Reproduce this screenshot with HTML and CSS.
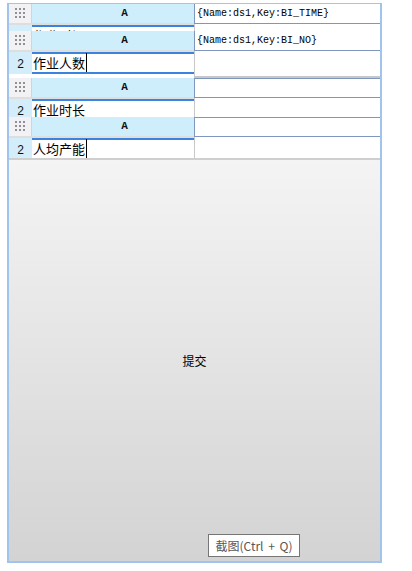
FILE: index.html
```html
<!DOCTYPE html>
<html lang="zh-CN">
<head>
    <meta charset="UTF-8">
    <meta name="viewport" content="width=device-width, initial-scale=1.0">
    <title>提交</title>
    <link rel="stylesheet" href="styles.css">
</head>
<body>
    <div class="frame">
        <div class="block b1">
            <div class="left">
                <div class="head"><span class="grip"><i></i><i></i><i></i><i></i><i></i><i></i><i></i><i></i><i></i></span><span class="col">A</span></div>
                <div class="sep"></div>
                <div class="row"><span class="num">2</span><span class="field">作业时间</span></div>
            </div>
            <div class="right">
                <div class="cell key">{Name:ds1,Key:BI_TIME}</div>
                <div class="cell"></div>
            </div>
        </div>

        <div class="block b2">
            <div class="left">
                <div class="head"><span class="grip"><i></i><i></i><i></i><i></i><i></i><i></i><i></i><i></i><i></i></span><span class="col">A</span></div>
                <div class="sep"></div>
                <div class="row"><span class="num">2</span><span class="field"><span class="caret">作业人数</span></span></div>
            </div>
            <div class="right">
                <div class="cell key">{Name:ds1,Key:BI_NO}</div>
                <div class="cell"></div>
            </div>
        </div>

        <div class="block b3">
            <div class="left">
                <div class="head"><span class="grip"><i></i><i></i><i></i><i></i><i></i><i></i><i></i><i></i><i></i></span><span class="col">A</span></div>
                <div class="sep"></div>
                <div class="row"><span class="num">2</span><span class="field">作业时长</span></div>
            </div>
            <div class="right">
                <div class="cell key"></div>
                <div class="cell"></div>
            </div>
        </div>

        <div class="block b4">
            <div class="left">
                <div class="head"><span class="grip"><i></i><i></i><i></i><i></i><i></i><i></i><i></i><i></i><i></i></span><span class="col">A</span></div>
                <div class="sep"></div>
                <div class="row"><span class="num">2</span><span class="field"><span class="caret">人均产能</span></span></div>
            </div>
            <div class="right">
                <div class="cell key"></div>
                <div class="cell"></div>
            </div>
        </div>

        <button class="submit">提交</button>

        <div class="tooltip">截图(Ctrl + Q)</div>
    </div>
</body>
</html>
```

FILE: styles.css
```css
* {
    margin: 0;
    padding: 0;
    box-sizing: border-box;
}

body {
    font-family: "Noto Sans CJK SC", "Noto Sans", sans-serif;
    background: #ffffff;
    width: 412px;
    height: 571px;
    overflow: hidden;
}

.frame {
    position: relative;
    width: 375px;
    height: 560px;
    margin: 3px 0 0 7px;
    border: 2px solid #9fc5ef;
    border-top-width: 1px;
    display: flex;
    flex-direction: column;
}

.block {
    display: grid;
    grid-template-columns: 185px 1fr;
    overflow: hidden;
    flex-shrink: 0;
    background: #ffffff;
}

.b1 { height: 27px; }
.b2 { height: 47px; }
.b3 { height: 39px; }
.b4 { height: 43px; border-bottom: 2px solid #cfcfcf; }

.head {
    display: flex;
    height: 19px;
}

.grip {
    width: 23px;
    background: #f2f2f4;
    border-right: 1px solid #d4d4d4;
    display: grid;
    grid-template-columns: repeat(3, 2px);
    grid-template-rows: repeat(3, 2px);
    gap: 2px;
    align-content: center;
    justify-content: center;
    padding-bottom: 2px;
}

.grip i {
    display: block;
    background: #909096;
}

.col {
    flex: 1;
    background: #cdeefa;
    text-align: center;
    padding-left: 23px;
    font-family: "Liberation Mono", monospace;
    font-size: 11px;
    font-weight: bold;
    line-height: 19px;
    color: #111;
}

.sep {
    height: 2px;
    background: #dedede;
}

.row {
    display: flex;
    height: 22px;
}

.num {
    width: 23px;
    background: #d3eefa;
    text-align: center;
    font-family: "Liberation Sans", sans-serif;
    font-size: 12px;
    line-height: 24px;
    color: #111;
}

.field {
    flex: 1;
    background: #ffffff;
    border-top: 2px solid #3a84e0;
    border-bottom: 2px solid #3a84e0;
    padding-left: 1px;
    font-size: 13px;
    line-height: 18px;
    color: #000;
}

.caret {
    border-right: 1px solid #000;
    padding-right: 1px;
}

.right {
    display: flex;
    flex-direction: column;
}

.cell {
    flex: 1;
    border-left: 1px solid #c8c8c8;
    border-bottom: 2px solid #c8c8c8;
}

.cell.key {
    flex: 0 0 20px;
    border-left-color: #7f97bc;
    border-bottom: 1px solid #7f97bc;
    font-family: "Liberation Mono", monospace;
    font-size: 10px;
    line-height: 19px;
    padding-left: 2px;
    color: #000;
}

.b3 .cell.key,
.b4 .cell.key {
    border-top: 1px solid #7f97bc;
}

.submit {
    flex: 1;
    border: none;
    background: linear-gradient(#f4f4f4, #d3d3d3);
    font-family: "Noto Sans CJK SC", sans-serif;
    font-size: 12px;
    color: #000;
}

.tooltip {
    position: absolute;
    left: 199px;
    top: 530px;
    width: 92px;
    height: 23px;
    background: #ffffff;
    border: 1px solid #767676;
    text-align: center;
    font-size: 12px;
    line-height: 21px;
    word-spacing: 2px;
    color: #575757;
}
```
